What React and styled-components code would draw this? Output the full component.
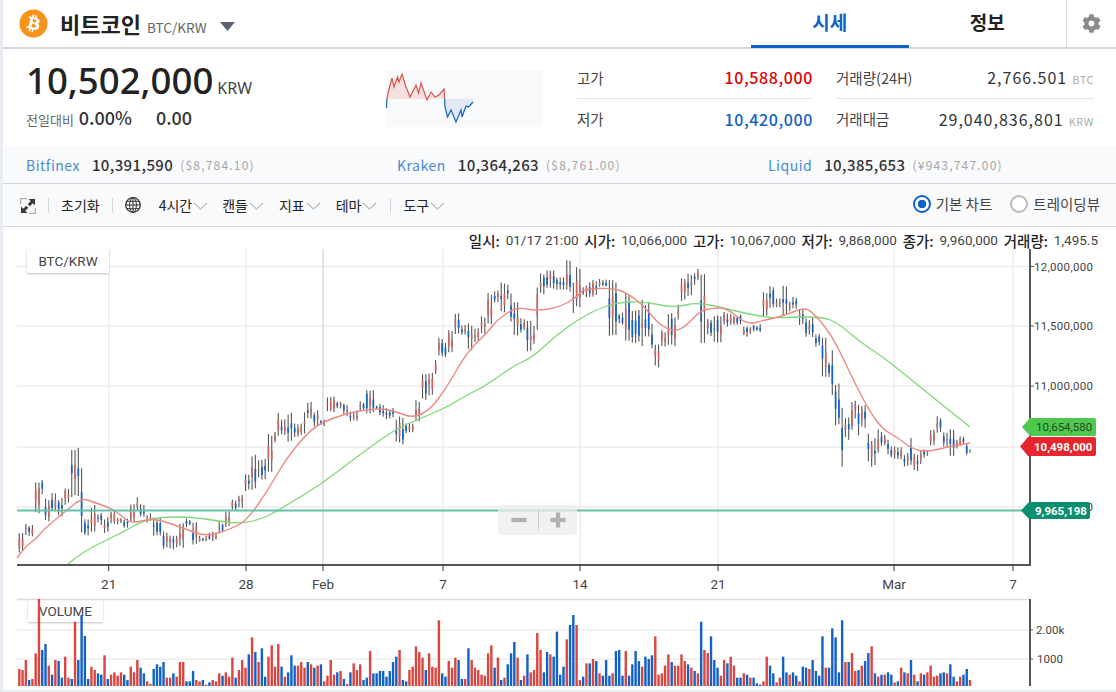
import styled, { createGlobalStyle } from "styled-components";
import { FaBitcoin, FaCog } from "react-icons/fa";
import { Minus, Plus } from "lucide-react";

const KO = `"Noto Sans CJK KR", "Noto Sans", sans-serif`;
const LATIN = `"Noto Sans", "Noto Sans CJK KR", sans-serif`;
const CHART_FONT = `Roboto, "Noto Sans CJK KR", sans-serif`;

const RED = "#d9463f";
const BLUE = "#1261c4";

// volume bars, read off the picture: colour + top of the bar
const VOL = `r327 r330 r300 b360 r357 r280 r117 b270 b252 r317 b344 r300 b303 b353 r290 r353 b357 r185 b300 b165 b228 b357 r320 r330 b340 b344 r286 b357 r344 r337 r347 r337 b344 b360 r320 r337 r300 b323 b340 r364 r372 b327 b313 b320 b306 r353 r353 b340 r350 r306 r306 b364 b364 b333 r360 r364 b360 r374 b367 r360 r364 r340 b347 r337 r350 r293 b353 r330 r300 r323 b283 r232 b276 r306 b265 b350 r290 r256 r320 r252 b320 r350 b337 b286 b317 r317 r306 r323 b306 r313 b323 r317 b313 r364 r347 r300 r344 b337 r333 b357 r372 b337 r310 r330 r313 b360 b353 r273 b340 b340 b333 b333 b350 b333 b306 b290 r270 b360 b364 r330 r320 r259 r276 r293 b330 r280 r320 r323 r181 b340 b350 r303 r323 r293 b300 b357 r357 b265 r300 r323 r330 r344 r347 r280 r256 b323 r293 b360 r353 b313 b280 b246 r293 b360 r347 b283 r337 r330 r219 r270 b337 b276 r283 b290 b215 b344 b320 r238 b195 b165 r195 r360 b350 r310 b310 r297 b303 r340 b347 b300 b347 r340 b273 b270 b347 r273 b347 b313 b273 b303 r320 b290 b297 b286 r229 r344 r340 r317 r283 b306 r317 r317 r283 r303 b313 r323 b333 r340 b185 r270 r279 b229 b300 b323 r347 r300 b310 r290 r317 b353 b353 r340 b344 r353 b353 b370 b374 r364 r290 b317 b340 r367 r353 b290 b337 r344 b337 b347 r364 b320 b323 r327 b300 b333 b347 b229 r323 b323 b205 b232 b337 b181 r306 b306 r279 r333 b330 r317 b303 b279 r259 b340 r350 b344 r344 b337 b344 r367 b364 r323 b337 r340 b300 r344 b364 r340 b344 r337 r317 r350 r347 b340 b337 r340 b313 b350 r364 r350 b344 b327 r360`
  .split(" ")
  .map((t) => ({ up: t[0] === "r", h: (378 - Number(t.slice(1))) / 3 }));

// x, top, bottom of the candle range
const RANGE = [
  [19,533,553],[27,523,538],[39,482,515],[43,480,497],[47,498,522],[55,493,513],[62,497,517],[66,487,505],[76,447,497],[83,467,535],
  [86,517,537],[92,505,533],[98,512,525],[105,517,533],[112,510,525],[120,518,525],[128,517,529],[131,503,523],[138,495,512],[141,503,518],
  [148,513,523],[157,517,537],[165,530,550],[173,535,550],[182,523,548],[188,517,528],[194,520,545],[202,535,543],[213,530,542],[220,522,533],
  [227,510,527],[233,498,512],[242,495,510],[248,472,492],[253,454,490],[258,460,480],[265,457,482],[269,433,472],[275,430,443],[278,413,437],
  [285,418,437],[290,412,442],[298,422,437],[305,410,435],[309,400,420],[315,410,427],[322,417,428],[332,396,413],[338,400,410],[347,403,417],
  [353,410,423],[362,400,412],[371,389,415],[378,403,410],[380,403,418],[390,408,420],[397,418,442],[400,415,445],[410,422,435],[417,400,422],
  [423,372,400],[430,372,397],[435,358,377],[440,337,358],[446,343,360],[450,330,353],[456,312,335],[463,323,335],[469,323,350],[475,327,342],
  [482,316,335],[488,292,325],[495,290,303],[502,282,313],[507,282,300],[512,292,322],[515,300,338],[522,318,333],[528,320,352],[535,325,345],
  [538,287,330],[543,272,295],[551,270,290],[560,275,292],[571,260,292],[574,282,315],[578,266,307],[583,285,298],[593,280,298],[600,278,288],
  [613,280,337],[622,312,325],[626,293,343],[635,310,343],[643,298,347],[647,302,338],[652,323,350],[656,343,368],[663,330,347],[669,312,345],
  [676,315,347],[678,302,320],[683,277,302],[688,273,297],[695,272,285],[698,268,282],[702,272,343],[708,318,337],[718,315,343],[725,312,327],
  [735,313,325],[747,325,337],[757,323,333],[765,292,318],[770,285,308],[778,298,308],[783,284,317],[790,300,313],[793,295,310],[800,308,327],
  [806,318,337],[813,315,340],[818,333,348],[823,335,377],[830,362,377],[833,350,397],[837,382,427],[842,407,467],[846,417,440],[852,402,430],
  [856,400,420],[859,403,438],[863,405,428],[869,432,462],[873,438,468],[878,428,455],[884,432,448],[888,438,457],[892,445,460],[898,447,462],
  [905,453,467],[912,438,465],[916,453,472],[921,450,467],[927,448,458],[932,428,447],[938,416,433],[945,430,448],[952,427,457],[957,438,450],
  [961,435,447],[967,441,455],[971,447,453],
];

const MA_RED = [[17,558],[25,547],[37,538],[43,530],[67,510],[82,498],[93,502],[113,509],[123,517],[130,523],[147,520],[157,519],[183,528],[207,537],[233,528],[247,520],[267,492],[287,457],[313,427],[333,418],[353,412],[380,408],[397,412],[413,418],[430,410],[447,387],[467,352],[487,333],[497,320],[513,309],[523,308],[537,311],[560,307],[577,297],[583,289],[613,288],[627,293],[643,305],[657,322],[667,329],[677,331],[687,325],[700,311],[713,308],[727,308],[747,325],[765,320],[783,316],[800,309],[810,309],[832,335],[850,373],[867,407],[882,429],[897,437],[912,449],[927,452],[947,447],[970,443]];
const MA_GREEN = [[67,565],[80,553],[127,530],[140,522],[160,517],[193,517],[217,521],[243,524],[267,517],[287,505],[320,485],[350,462],[380,440],[400,427],[417,420],[447,407],[467,395],[487,385],[513,366],[533,357],[553,338],[577,320],[600,308],[617,303],[643,301],[673,308],[698,302],[727,309],[767,318],[793,317],[823,317],[838,323],[860,342],[883,357],[913,381],[940,403],[970,427]];

const SPARK_RED = [[1,29],[2,23],[6,8],[8,17],[11.5,7],[13,12],[16,4],[20,17],[24,27],[30,15],[32.5,23],[35,13],[41,30],[45,22],[49,27],[53,25],[58,19],[58.6,28.7]];
const SPARK_BLUE = [[0.4,38],[1,29]];
const SPARK_BLUE2 = [[58.6,28.7],[59,37],[61.5,47],[65,40],[70,52],[75,40],[76,47],[80,36],[82.5,37],[87,32]];

const smooth = (pts) => {
  let d = `M${pts[0][0]} ${pts[0][1]}`;
  for (let i = 1; i < pts.length - 1; i++) {
    const mx = (pts[i][0] + pts[i + 1][0]) / 2;
    const my = (pts[i][1] + pts[i + 1][1]) / 2;
    d += ` Q${pts[i][0]} ${pts[i][1]} ${mx} ${my}`;
  }
  const last = pts[pts.length - 1];
  return d + ` L${last[0]} ${last[1]}`;
};

const poly = (pts) => pts.map((p) => p.join(",")).join(" ");

let seed = 77;
const rnd = () => {
  seed = (seed * 16807) % 2147483647;
  return seed / 2147483647;
};

const barX = (i) => 19.3 + (i * (970 - 19.3)) / (VOL.length - 1);

const candles = VOL.map((v, i) => {
  const x = barX(i);
  let near = RANGE[0];
  RANGE.forEach((r) => {
    if (Math.abs(r[0] - x) < Math.abs(near[0] - x)) near = r;
  });
  const top = near[1] + rnd() * 3;
  const bot = near[2] - rnd() * 3;
  const span = bot - top;
  const a = top + span * (0.15 + rnd() * 0.35);
  const b = bot - span * (0.15 + rnd() * 0.35);
  return { x, top, bot, a, b, up: v.up };
});

const H_GRID = [266.5, 326, 386, 447, 507];
const V_GRID = [108.7, 246, 443, 580, 718, 894, 1013];
const PRICES = [
  ["12,000,000", 266.5],
  ["11,500,000", 326],
  ["11,000,000", 386],
  ["10,000,000", 507],
];
const DATES = [
  ["21", 108.7],
  ["28", 246],
  ["Feb", 323],
  ["7", 443],
  ["14", 580],
  ["21", 718],
  ["Mar", 894],
  ["7", 1013],
];

const GlobalStyle = createGlobalStyle`
  html, body {
    margin: 0;
    padding: 0;
    background: #e9ecf3;
  }
  body {
    font-family: ${KO};
    color: #333;
    overflow: hidden;
  }
`;

const Page = styled.div`
  width: 1113px;
  height: 690px;
  margin-left: 3px;
  background: #fff;
  overflow: hidden;
`;

const Header = styled.header`
  height: 47px;
  display: flex;
  align-items: stretch;
  border-bottom: 2px solid #d5d6dc;
  box-sizing: content-box;
`;

const Coin = styled.div`
  display: flex;
  align-items: center;
  padding-left: 16px;
  flex: 1;
  svg.logo {
    color: #f7931a;
    font-size: 29px;
  }
  h1 {
    margin: -2px 0 0 12px;
    font-size: 22px;
    font-weight: 700;
    color: #222;
    line-height: 1;
  }
  span {
    margin: 6px 0 0 6px;
    font-size: 13.6px;
    color: #666;
  }
  svg.caret {
    margin: 5px 0 0 13px;
  }
`;

const Tab = styled.div`
  width: 157.5px;
  display: flex;
  align-items: center;
  justify-content: center;
  font-size: 19px;
  font-weight: 700;
  color: ${(p) => (p.$active ? BLUE : "#222")};
  box-sizing: border-box;
  border-bottom: 3px solid ${(p) => (p.$active ? BLUE : "transparent")};
  margin-bottom: -1px;
  padding-bottom: 3px;
`;

const Gear = styled.div`
  width: 50px;
  box-sizing: border-box;
  border-left: 1px solid #dcdde2;
  display: flex;
  align-items: center;
  justify-content: center;
  color: #8a8a8a;
  font-size: 19px;
`;

const PriceRow = styled.section`
  height: 97px;
  display: flex;
`;

const PriceBlock = styled.div`
  width: 360px;
  padding: 6px 0 0 23px;
  box-sizing: border-box;
`;

const BigPrice = styled.div`
  display: flex;
  align-items: baseline;
  color: #222;
  font-family: ${LATIN};
  line-height: 50px;
  height: 50px;
  b {
    font-size: 36.6px;
    font-weight: 500;
  }
  small {
    font-size: 16px;
    margin-left: 4px;
    color: #444;
  }
`;

const Change = styled.div`
  display: flex;
  align-items: baseline;
  line-height: 24px;
  span {
    font-size: 13px;
    color: #666;
    margin-right: 5px;
  }
  b {
    font-size: 18px;
    font-weight: 500;
    color: #333;
    margin-right: 24px;
  }
`;

const Spark = styled.svg`
  display: block;
  width: 157px;
  height: 57px;
  margin: 21px 0 0 23px;
  background: #f8f9fb;
  flex: none;
`;

const Stats = styled.div`
  display: grid;
  grid-template-columns: 236px 258px;
  column-gap: 23px;
  margin-left: 34px;
  padding-top: 9px;
  align-self: flex-start;
`;

const Stat = styled.div`
  height: 41px;
  padding-bottom: 2px;
  display: flex;
  align-items: center;
  justify-content: space-between;
  box-sizing: border-box;
  border-bottom: ${(p) => (p.$line ? "1px solid #e3e4e8" : "none")};
  font-size: 14.5px;
  color: #444;
`;

const StatValue = styled.span`
  font-size: 16px;
  letter-spacing: ${(p) => (p.$bold ? "0.6px" : "1px")};
  font-weight: ${(p) => (p.$bold ? 500 : 400)};
  color: ${(p) => p.$color || "#333"};
  small {
    font-size: 11px;
    color: #aaa;
    margin-left: 5px;
    letter-spacing: 0.5px;
  }
`;

const Exchanges = styled.section`
  height: 37px;
  display: grid;
  grid-template-columns: repeat(3, 371px);
  padding-left: 23px;
  background: #f9fafc;
  border-bottom: 1px solid #d5d6dc;
`;

const Exchange = styled.div`
  display: flex;
  align-items: center;
  font-size: 14px;
  letter-spacing: 0.5px;
  a {
    color: #4a8ad4;
    margin-right: 12px;
  }
  b {
    font-size: 15px;
    font-weight: 500;
    color: #333;
    letter-spacing: 0.4px;
  }
  span {
    font-size: 12px;
    color: #a5a5a5;
    margin-left: 7px;
    letter-spacing: 1.2px;
  }
`;

const Toolbar = styled.nav`
  height: 42px;
  display: flex;
  align-items: center;
  padding-left: 17px;
  background: #f9fafc;
  border-bottom: 1px solid #d5d6dc;
  font-size: 14px;
  color: #222;
`;

const Sep = styled.i`
  width: 1px;
  height: 15px;
  background: #d5d6dc;
  margin: ${(p) => p.$margin || "0 12px"};
`;

const Menu = styled.div`
  display: flex;
  align-items: center;
  margin-left: ${(p) => p.$first || 0}px;
  margin-right: ${(p) => p.$gap || 13}px;
  svg {
    margin: 2px 0 0 1px;
  }
`;

const Radios = styled.div`
  margin-left: auto;
  display: flex;
  align-items: center;
  gap: 18px;
  padding-right: 16px;
  margin-top: -3px;
  font-size: 14.5px;
`;

const Radio = styled.label`
  display: flex;
  align-items: center;
  gap: 5px;
  color: #444;
  &::before {
    content: "";
    width: 18px;
    height: 18px;
    box-sizing: border-box;
    border-radius: 50%;
    border: 2px solid ${(p) => (p.$on ? BLUE : "#bbb")};
    background: ${(p) => (p.$on ? `radial-gradient(circle, ${BLUE} 0 4px, #fff 4.6px)` : "#fff")};
  }
`;

const InfoLine = styled.div`
  height: 22px;
  display: flex;
  justify-content: flex-end;
  align-items: center;
  gap: 5.8px;
  padding-right: 18px;
  padding-top: 4px;
  box-sizing: border-box;
  font-size: 13.5px;
  font-family: ${CHART_FONT};
  color: #444;
  b {
    font-family: ${KO};
    font-weight: 500;
    font-size: 14.5px;
    color: #222;
  }
`;

const ChartArea = styled.div`
  position: relative;
  height: 441px;
`;

const Plot = styled.svg`
  position: relative;
  z-index: 1;
  display: block;
  width: 1113px;
  height: 441px;
  font-family: ${CHART_FONT};
`;

const Legend = styled.div`
  position: absolute;
  z-index: ${(p) => (p.$under ? 0 : 2)};
  left: ${(p) => p.$x}px;
  top: ${(p) => p.$y}px;
  width: ${(p) => p.$w}px;
  height: ${(p) => p.$h}px;
  background: #fff;
  box-shadow: 0 1px 2px rgba(0, 0, 0, 0.25);
  font: 13.5px ${CHART_FONT};
  color: #444;
  display: flex;
  align-items: center;
  justify-content: center;
`;

const ZoomBox = styled.div`
  position: absolute;
  z-index: 2;
  left: 495px;
  top: 256px;
  width: 79px;
  height: 29px;
  border-radius: 4px;
  background: rgba(236, 236, 236, 0.75);
  box-shadow: 0 1px 1px rgba(0, 0, 0, 0.06);
  display: grid;
  grid-template-columns: 41px 38px;
  color: #b2b2b2;
  span {
    display: flex;
    align-items: center;
    justify-content: center;
  }
  span:first-child {
    position: relative;
  }
  span:first-child::after {
    content: "";
    position: absolute;
    right: 0;
    top: 4px;
    bottom: 4px;
    width: 1px;
    background: #cfcfcf;
  }
`;

const PriceTag = styled.div`
  position: absolute;
  z-index: 2;
  left: ${(p) => p.$x}px;
  top: ${(p) => p.$y}px;
  width: ${(p) => p.$w}px;
  height: ${(p) => p.$h}px;
  padding-left: 14px;
  box-sizing: border-box;
  background: ${(p) => p.$bg};
  color: ${(p) => p.$color};
  font: ${(p) => (p.$bold ? 700 : 400)} 11.5px ${CHART_FONT};
  display: flex;
  align-items: center;
  clip-path: polygon(8px 0, 100% 0, 100% 100%, 8px 100%, 0 50%);
  border-radius: 0 2px 2px 0;
`;

const Chevron = () => (
  <svg width="15" height="8" viewBox="0 0 15 8" fill="none" stroke="#9a9a9a" strokeWidth="1">
    <path d="M1 1l6.500 6 6.500-6" />
  </svg>
);

const ExpandIcon = () => (
  <svg width="16" height="16" viewBox="0 0 16 16" fill="none" style={{ marginTop: 1 }}>
    <path d="M.7 6V.7H7M15.300 10v5.300H9" stroke="#b0b0b0" strokeWidth="1.300" />
    <path d="M15 1v6.500l-2.200-2.200-3 3L7.700 6.200l3-3L8.500 1zM1 15V8.500l2.200 2.200 3-3 2.100 2.100-3 3L7.500 15z" fill="#3a3a3a" />
  </svg>
);

const GlobeIcon = () => (
  <svg width="16" height="16" viewBox="0 0 16 16" fill="none" stroke="#333" strokeWidth="1">
    <circle cx="8" cy="8" r="7.300" strokeWidth="1.300" />
    <ellipse cx="8" cy="8" rx="3.400" ry="7.300" />
    <path d="M8 .7v14.600M.7 8h14.600M1.700 4.300h12.600M1.700 11.700h12.600" />
  </svg>
);

const CandleChart = () => (
  <Plot viewBox="3 249 1113 441">
    {H_GRID.map((y) => (
      <line key={y} x1="17" x2="1030" y1={y} y2={y} stroke="#eeeeee" strokeWidth="1.600" />
    ))}
    {V_GRID.map((x) => (
      <line key={x} x1={x} x2={x} y1="249" y2="565" stroke="#ebebeb" strokeWidth="1.400" />
    ))}
    <line x1="323" x2="323" y1="249" y2="565" stroke="#c8c8c8" strokeWidth="1" />

    {candles.map((c, i) => (
      <g key={i}>
        <line x1={c.x} x2={c.x} y1={c.top} y2={c.bot} stroke="#555" strokeWidth="1.100" />
        <line x1={c.x} x2={c.x} y1={c.a} y2={c.b} stroke={c.up ? "#c9665f" : BLUE} strokeWidth="1.700" />
      </g>
    ))}

    <path d={smooth(MA_GREEN)} fill="none" stroke="#7ed97a" strokeWidth="1.300" />
    <path d={smooth(MA_RED)} fill="none" stroke="#ec8a84" strokeWidth="1.400" />
    <line x1="17" x2="1022" y1="510.500" y2="510.500" stroke="#63c1a7" strokeWidth="2" />

    <path d="M17 565H1030V249" fill="none" stroke="#555" strokeWidth="2" />
    {DATES.map(([label, x], i) => (
      <g key={i}>
        <line x1={x} x2={x} y1="565" y2="571" stroke="#333" strokeWidth="1" />
        <text x={x} y="589" textAnchor="middle" fontSize="13.500" fill="#444">
          {label}
        </text>
      </g>
    ))}
    {PRICES.map(([label, y]) => (
      <g key={label}>
        <line x1="1030" x2="1034" y1={y} y2={y} stroke="#555" strokeWidth="1" />
        <text x="1034" y={y + 4} fontSize="11.500" fill="#444" letterSpacing="0.3">
          {label}
        </text>
      </g>
    ))}

    <line x1="17" x2="1030" y1="599.500" y2="599.500" stroke="#dcdcdc" strokeWidth="1.500" />
    <line x1="17" x2="1030" y1="630" y2="630" stroke="#eeeeee" strokeWidth="1.500" />
    <line x1="17" x2="1030" y1="659" y2="659" stroke="#eeeeee" strokeWidth="1.500" />
    {VOL.map((v, i) => (
      <rect key={i} x={barX(i) - 1.200} y={686 - v.h} width="2.400" height={v.h} fill={v.up ? RED : BLUE} />
    ))}
    <line x1="1030" x2="1030" y1="599" y2="686" stroke="#555" strokeWidth="2" />
    <line x1="1030" x2="1033" y1="630" y2="630" stroke="#555" strokeWidth="1" />
    <line x1="1030" x2="1033" y1="659" y2="659" stroke="#555" strokeWidth="1" />
    <text x="1036" y="634" fontSize="11.500" fill="#444">
      2.00k
    </text>
    <text x="1037" y="663" fontSize="11.500" fill="#444">
      1000
    </text>
  </Plot>
);

const App = () => {
  return (
    <Page>
      <GlobalStyle />
      <Header>
        <Coin>
          <FaBitcoin className="logo" />
          <h1>비트코인</h1>
          <span>BTC/KRW</span>
          <svg className="caret" width="15" height="9" viewBox="0 0 15 9">
            <path d="M0 0h15l-7.500 9z" fill="#5b6270" />
          </svg>
        </Coin>
        <Tab $active>시세</Tab>
        <Tab>정보</Tab>
        <Gear>
          <FaCog />
        </Gear>
      </Header>

      <PriceRow>
        <PriceBlock>
          <BigPrice>
            <b>10,502,000</b>
            <small>KRW</small>
          </BigPrice>
          <Change>
            <span>전일대비</span>
            <b>0.00%</b>
            <b>0.00</b>
          </Change>
        </PriceBlock>
        <Spark viewBox="0 0 157 57">
          <polygon points={`1,29 ${poly(SPARK_RED)}`} fill="#f6dfdf" />
          <polygon points={poly(SPARK_BLUE2.concat([[87, 28.7]]))} fill="#e2e9f5" />
          <polyline points={poly(SPARK_RED)} fill="none" stroke="#d9534f" strokeWidth="1.200" />
          <polyline points={poly(SPARK_BLUE)} fill="none" stroke={BLUE} strokeWidth="1.200" />
          <polyline points={poly(SPARK_BLUE2)} fill="none" stroke={BLUE} strokeWidth="1.200" />
        </Spark>
        <Stats>
          <Stat $line>
            고가<StatValue $bold $color="#dd0000">10,588,000</StatValue>
          </Stat>
          <Stat $line>
            거래량(24H)
            <StatValue>
              2,766.501<small>BTC</small>
            </StatValue>
          </Stat>
          <Stat>
            저가<StatValue $bold $color={BLUE}>10,420,000</StatValue>
          </Stat>
          <Stat>
            거래대금
            <StatValue>
              29,040,836,801<small>KRW</small>
            </StatValue>
          </Stat>
        </Stats>
      </PriceRow>

      <Exchanges>
        <Exchange>
          <a>Bitfinex</a>
          <b>10,391,590</b>
          <span>($8,784.10)</span>
        </Exchange>
        <Exchange>
          <a>Kraken</a>
          <b>10,364,263</b>
          <span>($8,761.00)</span>
        </Exchange>
        <Exchange>
          <a>Liquid</a>
          <b>10,385,653</b>
          <span>(¥943,747.00)</span>
        </Exchange>
      </Exchanges>

      <Toolbar>
        <ExpandIcon />
        <Sep />
        <span>초기화</span>
        <Sep />
        <GlobeIcon />
        <Menu $first={18} $gap={14}>
          4시간
          <Chevron />
        </Menu>
        <Menu $gap={15}>
          캔들
          <Chevron />
        </Menu>
        <Menu $gap={15}>
          지표
          <Chevron />
        </Menu>
        <Menu $gap={13}>
          테마
          <Chevron />
        </Menu>
        <Sep $margin="0 12px 0 0" />
        <Menu>
          도구
          <Chevron />
        </Menu>
        <Radios>
          <Radio $on>기본 차트</Radio>
          <Radio>트레이딩뷰</Radio>
        </Radios>
      </Toolbar>

      <InfoLine>
        <b>일시:</b> 01/17 21:00 <b>시가:</b> 10,066,000 <b>고가:</b> 10,067,000 <b>저가:</b> 9,868,000 <b>종가:</b> 9,960,000 <b>거래량:</b> 1,495.5
      </InfoLine>

      <ChartArea>
        <CandleChart />
        <Legend $x={24} $y={0} $w={82} $h={24}>
          BTC/KRW
        </Legend>
        <Legend $under $x={25} $y={351} $w={75} $h={22}>
          VOLUME
        </Legend>
        <ZoomBox>
          <span>
            <Minus size={26} strokeWidth={4} strokeLinecap="butt" />
          </span>
          <span>
            <Plus size={26} strokeWidth={4} strokeLinecap="butt" />
          </span>
        </ZoomBox>
        <PriceTag $x={1019} $y={169} $w={74} $h={18} $bg="#50c850" $color="#1d4d1d">
          10,654,580
        </PriceTag>
        <PriceTag $x={1017} $y={188} $w={76} $h={19} $bg="#e5262e" $color="#fff" $bold>
          10,498,000
        </PriceTag>
        <PriceTag $x={1018} $y={253} $w={69} $h={17} $bg="#0b8f6e" $color="#fff" $bold>
          9,965,198
        </PriceTag>
      </ChartArea>
    </Page>
  );
};

export default App;
